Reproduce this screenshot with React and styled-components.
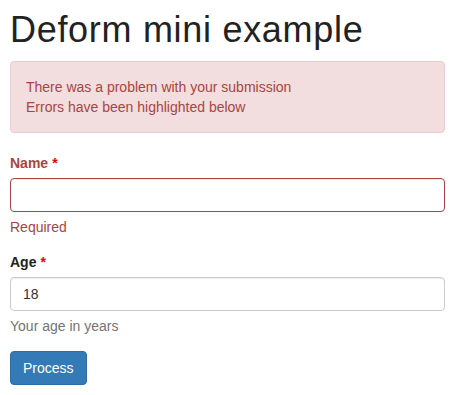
import React from 'react'
import styled, { createGlobalStyle } from 'styled-components'

const GlobalStyle = createGlobalStyle`
    body {
        margin: 0;
        background: #fff;
        font-family: "Liberation Sans", Arial, sans-serif;
        font-size: 14px;
        line-height: 20px;
        color: #333;
    }
`

const Page = styled.div`
    padding: 10px 10px 0;
`

const Title = styled.h1`
    margin: 0 0 11px;
    font-size: 36px;
    font-weight: 500;
    line-height: 1.1;
    letter-spacing: 0.7px;
    color: #222;
`

const Alert = styled.div`
    padding: 15px;
    margin-bottom: 20px;
    border: 1px solid #ebccd1;
    border-radius: 4px;
    background: #f2dede;
    color: #a94442;
`

const Group = styled.div`
    margin-bottom: 15px;
`

const Label = styled.label`
    display: inline-block;
    margin-bottom: 5px;
    font-weight: 700;
    color: ${(p) => (p.$error ? '#a94442' : '#222')};
`

const Req = styled.span`
    color: #e00;
    margin-left: 4px;
`

const Input = styled.input`
    display: block;
    box-sizing: border-box;
    width: 100%;
    height: 34px;
    padding: 6px 12px;
    font-family: inherit;
    font-size: 14px;
    line-height: 20px;
    color: #333;
    background: #fff;
    border: 1px solid ${(p) => (p.$error ? '#a94442' : '#ccc')};
    border-radius: 4px;
    box-shadow: inset 0 1px 1px rgba(0, 0, 0, 0.075);
    outline: none;
`

const Help = styled.div`
    margin-top: 5px;
    color: ${(p) => (p.$error ? '#a94442' : '#737373')};
`

const Button = styled.button`
    display: inline-block;
    padding: 6px 12px;
    font-family: inherit;
    font-size: 14px;
    line-height: 20px;
    color: #fff;
    background: #337ab7;
    border: 1px solid #2e6da4;
    border-radius: 4px;
    cursor: pointer;
`

function App() {
    return (
        <>
            <GlobalStyle />
            <Page>
                <Title>Deform mini example</Title>
                <Alert>
                    There was a problem with your submission
                    <br />
                    Errors have been highlighted below
                </Alert>
                <Group>
                    <Label $error>Name<Req>*</Req></Label>
                    <Input $error type="text" defaultValue="" />
                    <Help $error>Required</Help>
                </Group>
                <Group>
                    <Label>Age<Req>*</Req></Label>
                    <Input type="text" defaultValue="18" />
                    <Help>Your age in years</Help>
                </Group>
                <Button>Process</Button>
            </Page>
        </>
    )
}

export default App
